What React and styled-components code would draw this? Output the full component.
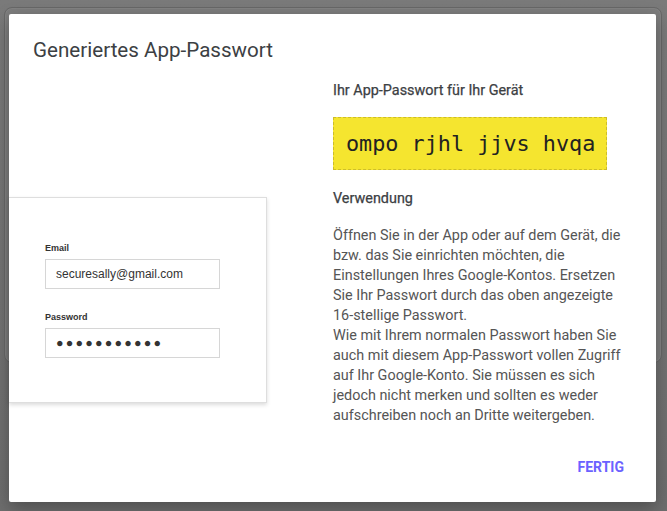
import styled, { createGlobalStyle } from "styled-components";

const GlobalStyle = createGlobalStyle`
  html, body {
    margin: 0;
    padding: 0;
    width: 667px;
    height: 511px;
    overflow: hidden;
    font-family: Roboto, "Noto Sans", Arial, sans-serif;
  }
`;

export default function App() {
  return (
    <Page>
      <GlobalStyle />
      <BackPanel />
      <Dialog>
        <Title>Generiertes App-Passwort</Title>
        <Body>
          <Illustration>
            <LoginCard>
              <FieldLabel>Email</FieldLabel>
              <FakeInput>securesally@gmail.com</FakeInput>
              <FieldLabel gap>Password</FieldLabel>
              <FakeInput dots>●●●●●●●●●●●</FakeInput>
            </LoginCard>
          </Illustration>
          <Info>
            <Heading>Ihr App-Passwort für Ihr Gerät</Heading>
            <PasswordBox>ompo rjhl jjvs hvqa</PasswordBox>
            <Heading spaced>Verwendung</Heading>
            <Text>
              Öffnen Sie in der App oder auf dem Gerät, die bzw. das Sie einrichten möchten, die
              Einstellungen Ihres Google-Kontos. Ersetzen Sie Ihr Passwort durch das oben
              angezeigte 16-stellige Passwort.
              <br />
              Wie mit Ihrem normalen Passwort haben Sie auch mit diesem App-Passwort vollen
              Zugriff auf Ihr Google-Konto. Sie müssen es sich jedoch nicht merken und sollten es
              weder aufschreiben noch an Dritte weitergeben.
            </Text>
          </Info>
        </Body>
        <Footer>
          <DoneButton>Fertig</DoneButton>
        </Footer>
      </Dialog>
    </Page>
  );
}

const Page = styled.div`
  position: relative;
  width: 667px;
  height: 511px;
  background: linear-gradient(180deg, #7a7a7a, #6e6e6e);
  overflow: hidden;
`;

// the page behind the dim overlay
const BackPanel = styled.div`
  position: absolute;
  left: 4px;
  top: 7px;
  width: 656px;
  height: 354px;
  border: 1px solid #686868;
  border-radius: 8px;
  background: #7d7d7d;
  box-shadow: inset 0 0 0 1px rgba(255, 255, 255, 0.05);
`;

const Dialog = styled.div`
  position: absolute;
  left: 9px;
  top: 14px;
  width: 647px;
  height: 488px;
  box-sizing: border-box;
  background: #fff;
  border-radius: 2px;
  box-shadow: 0 6px 18px rgba(0, 0, 0, 0.3);
  display: flex;
  flex-direction: column;
  padding: 22px 24px 0 24px;
`;

const Title = styled.h2`
  margin: 0;
  font-size: 20.6px;
  line-height: 28px;
  font-weight: 400;
  color: #3c4043;
`;

const Body = styled.div`
  display: grid;
  grid-template-columns: 276px 299px;
  column-gap: 24px;
  margin-top: 17px;
`;

const Illustration = styled.div`
  margin-left: -24px;
  padding-top: 116px;
`;

const LoginCard = styled.div`
  width: 258px;
  height: 206px;
  box-sizing: border-box;
  background: #fff;
  border: 1px solid #dedede;
  border-left: none;
  box-shadow: 0 2px 4px rgba(0, 0, 0, 0.14);
  padding: 44px 0 0 36px;
  display: flex;
  flex-direction: column;
  font-family: "Liberation Sans", Arial, sans-serif;
`;

const FieldLabel = styled.div`
  font-size: 9px;
  line-height: 12px;
  font-weight: 700;
  color: #333;
  margin-top: ${(p) => (p.gap ? "22px" : "0")};
`;

const FakeInput = styled.div`
  margin-top: 5px;
  width: 175px;
  height: 30px;
  box-sizing: border-box;
  border: 1px solid #d6d6d6;
  padding-left: 10px;
  display: flex;
  align-items: center;
  color: #333;
  font-size: ${(p) => (p.dots ? "12.5px" : "12px")};
  letter-spacing: ${(p) => (p.dots ? "2.2px" : "0")};
`;

const Info = styled.div`
  display: flex;
  flex-direction: column;
  align-items: flex-start;
`;

const Heading = styled.div`
  font-size: 14.4px;
  line-height: 20px;
  font-weight: 400;
  color: #3c4043;
  -webkit-text-stroke: 0.25px #3c4043;
  margin-top: ${(p) => (p.spaced ? "19px" : "0")};
`;

const PasswordBox = styled.div`
  margin-top: 16px;
  background: #f5e52f;
  border: 1px dashed #cdbd2a;
  padding: 11px 11px 11px 12px;
  font-family: "DejaVu Sans Mono", "Liberation Mono", monospace;
  font-size: 21.8px;
  line-height: 29px;
  color: #222;
  white-space: nowrap;
`;

const Text = styled.p`
  margin: 17px 0 0 0;
  font-size: 14.4px;
  line-height: 20px;
  color: #555;
`;

const Footer = styled.div`
  display: flex;
  justify-content: flex-end;
  margin-top: 23px;
`;

const DoneButton = styled.button`
  border: none;
  background: none;
  height: 36px;
  padding: 0 8px;
  font-family: Roboto, Arial, sans-serif;
  font-size: 14px;
  font-weight: 700;
  text-transform: uppercase;
  color: #6b62ff;
  cursor: pointer;
`;
